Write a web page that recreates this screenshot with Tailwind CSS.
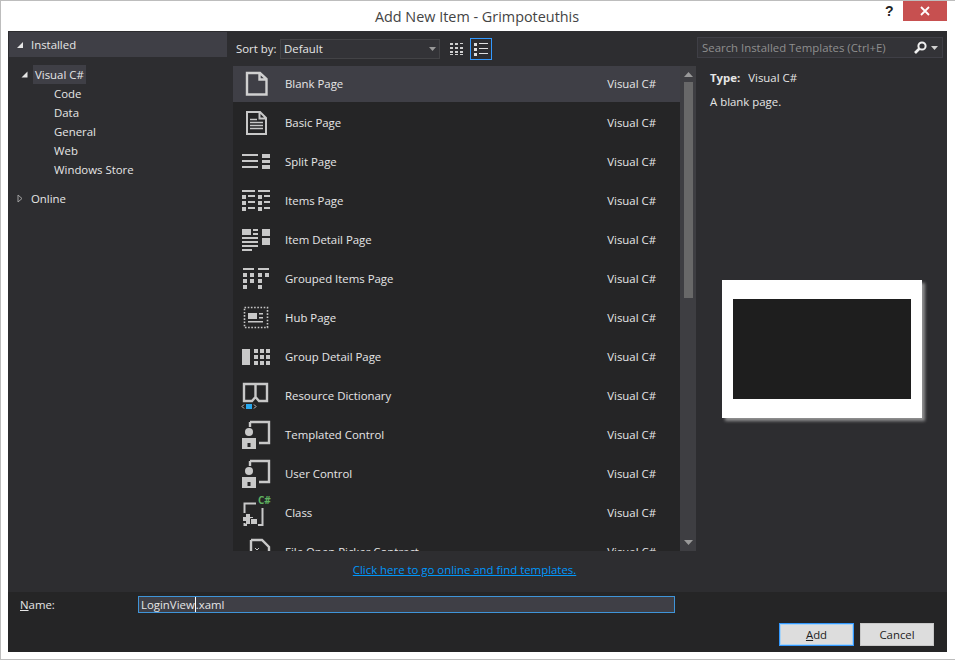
<!DOCTYPE html>
<html lang="en">
<head>
<meta charset="UTF-8">
<title>Add New Item - Grimpoteuthis</title>
<script src="https://cdn.jsdelivr.net/npm/@tailwindcss/browser@4"></script>
</head>
<body class="m-0 bg-white">
<div class="w-[955px] h-[660px] overflow-hidden flex flex-col bg-white border border-[#bdbdbd] border-r-0 font-['Open_Sans','Noto_Sans',sans-serif] text-[11.4px] leading-[16px] text-[#e6e6e6]">
  <!-- title bar -->
  <div class="h-[30px] shrink-0 flex relative">
    <div class="flex-1 flex items-center justify-center text-[14.4px] text-[#444] pt-[1px] pr-[2px]">Add New Item - Grimpoteuthis</div>
    <div class="absolute left-[884px] top-[2px] text-[14px] font-bold text-[#222] font-['Liberation_Sans',sans-serif]">?</div>
    <div class="absolute left-[902px] top-0 w-[44px] h-[20px] bg-[#c75050] flex items-center justify-center">
      <svg width="12" height="10" viewBox="0 0 12 10"><path d="M2 1 L10 9 M10 1 L2 9" stroke="#fff" stroke-width="1.8"/></svg>
    </div>
  </div>

  <!-- dialog body -->
  <div class="ml-[7px] w-[939px] h-[621px] shrink-0 bg-[#2d2d30] flex flex-col">
    <div class="h-[561px] shrink-0 flex">
      <!-- left tree -->
      <div class="w-[218px] ml-[1px] shrink-0 pt-[1px]">
        <div class="h-[25px] bg-[#3f3f46] flex items-center pl-[7px]">
          <svg width="8" height="8" viewBox="0 0 8 8" class="mr-[7px]"><path d="M7 1 V7 H1 Z" fill="#e6e6e6"/></svg>
          <span>Installed</span>
        </div>
        <div class="pt-[8px]">
          <div class="h-[19px] flex items-center pl-[12px]">
            <svg width="7" height="7" viewBox="0 0 7 7" class="mr-[5px]"><path d="M6.5 0.5 V6.5 H0.5 Z" fill="#e6e6e6"/></svg>
            <span class="bg-[#3f3f46] px-[2px] h-[19px] flex items-center">Visual C#</span>
          </div>
          <div class="pl-[45px]">
            <div class="h-[19px] flex items-center">Code</div>
            <div class="h-[19px] flex items-center">Data</div>
            <div class="h-[19px] flex items-center">General</div>
            <div class="h-[19px] flex items-center">Web</div>
            <div class="h-[19px] flex items-center">Windows Store</div>
          </div>
          <div class="h-[19px] mt-[10px] flex items-center pl-[8px]">
            <svg width="6" height="9" viewBox="0 0 6 9" class="mr-[8px]"><path d="M1 1 L5 4.5 L1 8 Z" fill="none" stroke="#a0a0a0"/></svg>
            <span>Online</span>
          </div>
        </div>
      </div>

      <!-- middle -->
      <div class="w-[463px] ml-[6px] shrink-0 flex flex-col">
        <div class="h-[35px] flex items-center shrink-0 relative">
          <span class="ml-[3px] w-[44px]">Sort by:</span>
          <div class="w-[160px] h-[20px] ml-[0px] mt-[1px] bg-[#333337] border border-[#434346] flex items-center justify-between pl-[3px] pr-[3px]">
            <span>Default</span>
            <svg width="7" height="4" viewBox="0 0 7 4"><path d="M0 0 H7 L3.5 4 Z" fill="#999"/></svg>
          </div>
          <svg width="14" height="14" viewBox="0 0 14 14" class="ml-[10px]" fill="#d0d0d0"><path d="M0 1h3v2H0zM5 1h3v2H5zM10 1h3v1h-3zM0 5h3v2H0zM5 5h3v2H5zM10 5h3v2h-3zM0 9h3v2H0zM5 9h3v2H5zM10 9h3v2h-3zM0 12h3v1H0zM5 12h3v1H5zM10 12h3v1h-3z"/></svg>
          <div class="w-[22px] h-[22px] ml-[6px] border border-[#3399ff] flex items-center justify-center">
            <svg width="16" height="14" viewBox="0 0 16 14" fill="#e0e0e0"><path d="M1 1h3v3H1zM6 1h9v1H6zM1 6h3v3H1zM6 6h9v1H6zM1 11h3v3H1zM6 11h9v1H6z"/></svg>
          </div>
        </div>

        <div class="h-[485px] shrink-0 flex bg-[#252526] overflow-hidden">
          <div class="w-[447px] shrink-0 overflow-hidden">
            <div class="h-[36px] mb-[3px] flex items-center bg-[#3f3f46] pl-[8px] pr-[24px]">
              <svg width="32" height="32" viewBox="0 0 32 32" class="shrink-0"><path d="M6 5 H19 L25.5 11 V26.5 H6 Z M18.5 5 V11.5 H25.5" fill="none" stroke="#d0d0d0" stroke-width="2.4"/></svg>
              <span class="ml-[12px] flex-1">Blank Page</span><span>Visual C#</span>
            </div>
            <div class="h-[36px] mb-[3px] flex items-center pl-[8px] pr-[24px]">
              <svg width="32" height="32" viewBox="0 0 32 32" class="shrink-0"><path d="M6 5 H19 L25 11 V27 H6 Z M18.5 5 V11.5 H25" fill="none" stroke="#c8c8c8" stroke-width="2"/><path d="M9 12.5h7M9 15.5h13M9 18.5h13M9 21.5h13" stroke="#c8c8c8" stroke-width="1.6"/></svg>
              <span class="ml-[12px] flex-1">Basic Page</span><span>Visual C#</span>
            </div>
            <div class="h-[36px] mb-[3px] flex items-center pl-[8px] pr-[24px]">
              <svg width="32" height="32" viewBox="0 0 32 32" class="shrink-0" fill="#c8c8c8"><path d="M1 8h16v2H1zM1 14h16v2H1zM1 20h16v2H1zM21 8h8v4h-8zM21 14h8v3h-8zM21 19h8v4h-8z"/></svg>
              <span class="ml-[12px] flex-1">Split Page</span><span>Visual C#</span>
            </div>
            <div class="h-[36px] mb-[3px] flex items-center pl-[8px] pr-[24px]">
              <svg width="32" height="32" viewBox="0 0 32 32" class="shrink-0" fill="#c8c8c8"><path d="M1 5h13v2H1zM17 5h12v2H17zM1 10h4v4H1zM7 10h7v2H7zM17 10h4v4h-4zM23 10h6v2h-6zM1 16h4v4H1zM7 16h7v2H7zM17 16h4v4h-4zM23 16h6v2h-6zM1 22h4v4H1zM7 22h7v2H7zM17 22h4v4h-4zM23 22h6v2h-6z"/></svg>
              <span class="ml-[12px] flex-1">Items Page</span><span>Visual C#</span>
            </div>
            <div class="h-[36px] mb-[3px] flex items-center pl-[8px] pr-[24px]">
              <svg width="32" height="32" viewBox="0 0 32 32" class="shrink-0" fill="#c8c8c8"><path d="M1 5h9v6H1zM12 5h5v2h-5zM12 9h5v2h-5zM1 13h16v2H1zM1 17h16v2H1zM1 21h16v2H1zM1 25h10v2H1zM21 5h8v7h-8zM21 14h8v7h-8z"/></svg>
              <span class="ml-[12px] flex-1">Item Detail Page</span><span>Visual C#</span>
            </div>
            <div class="h-[36px] mb-[3px] flex items-center pl-[8px] pr-[24px]">
              <svg width="32" height="32" viewBox="0 0 32 32" class="shrink-0" fill="#c8c8c8"><path d="M2 5h11v2H2zM17 5h11v2H17zM2 10h4v4H2zM9 10h4v4H9zM17 10h4v4h-4zM24 10h4v4h-4zM2 16h4v4H2zM9 16h4v4H9zM17 16h4v4h-4zM2 22h4v4H2zM17 22h4v4h-4z"/></svg>
              <span class="ml-[12px] flex-1">Grouped Items Page</span><span>Visual C#</span>
            </div>
            <div class="h-[36px] mb-[3px] flex items-center pl-[8px] pr-[24px]">
              <svg width="32" height="32" viewBox="0 0 32 32" class="shrink-0"><rect x="3.5" y="5.5" width="23" height="20" fill="none" stroke="#c8c8c8" stroke-width="1.6" stroke-dasharray="1.6 1.6"/><path d="M7 11h9v6H7zM7 19h15v1.5H7zM18 11h4v1.5h-4zM18 15h4v1.5h-4z" fill="#c8c8c8"/></svg>
              <span class="ml-[12px] flex-1">Hub Page</span><span>Visual C#</span>
            </div>
            <div class="h-[36px] mb-[3px] flex items-center pl-[8px] pr-[24px]">
              <svg width="32" height="32" viewBox="0 0 32 32" class="shrink-0" fill="#c8c8c8"><path d="M1 8h8v16H1zM13 8h4v4h-4zM19 8h4v4h-4zM25 8h4v4h-4zM13 14h4v4h-4zM19 14h4v4h-4zM25 14h4v4h-4zM13 20h4v4h-4zM19 20h4v4h-4zM25 20h4v4h-4z"/></svg>
              <span class="ml-[12px] flex-1">Group Detail Page</span><span>Visual C#</span>
            </div>
            <div class="h-[36px] mb-[3px] flex items-center pl-[8px] pr-[24px]">
              <svg width="32" height="32" viewBox="0 0 32 32" class="shrink-0"><path d="M3 4 H14.5 V17 L11 21 H3 Z M14.5 4 H26 V21 H18 L14.5 17" fill="none" stroke="#c8c8c8" stroke-width="2.4"/><rect x="5" y="24" width="6" height="5" fill="#29a9f0"/><path d="M3 24.5 L1 26.5 L3 28.5 M13 24.5 L15 26.5 L13 28.5" fill="none" stroke="#c8c8c8"/></svg>
              <span class="ml-[12px] flex-1">Resource Dictionary</span><span>Visual C#</span>
            </div>
            <div class="h-[36px] mb-[3px] flex items-center pl-[8px] pr-[24px]">
              <svg width="32" height="32" viewBox="0 0 32 32" class="shrink-0"><path d="M9 3 H28 V24 H18 M9 3 V8" fill="none" stroke="#c8c8c8" stroke-width="2.4"/><circle cx="8" cy="13" r="4" fill="#c8c8c8"/><path d="M1 19 H15 V30 H1 Z M6.5 24 h3 v4 h-3 Z" fill="#c8c8c8" fill-rule="evenodd"/></svg>
              <span class="ml-[12px] flex-1">Templated Control</span><span>Visual C#</span>
            </div>
            <div class="h-[36px] mb-[3px] flex items-center pl-[8px] pr-[24px]">
              <svg width="32" height="32" viewBox="0 0 32 32" class="shrink-0"><path d="M9 3 H28 V24 H18 M9 3 V8" fill="none" stroke="#c8c8c8" stroke-width="2.4"/><circle cx="8" cy="13" r="4" fill="#c8c8c8"/><path d="M1 19 H15 V30 H1 Z M6.5 24 h3 v4 h-3 Z" fill="#c8c8c8" fill-rule="evenodd"/></svg>
              <span class="ml-[12px] flex-1">User Control</span><span>Visual C#</span>
            </div>
            <div class="h-[36px] mb-[3px] flex items-center pl-[8px] pr-[24px]">
              <div class="w-[32px] h-[32px] shrink-0 relative">
                <svg width="32" height="32" viewBox="0 0 32 32"><path d="M3.5 16 V6.5 H15 M21.5 11 V28 H17 M3.5 26 V28 H6" fill="none" stroke="#c8c8c8" stroke-width="2"/><path d="M2 20h3v-3h4v3h3v4h-3v3H5v-3H2z" fill="#c8c8c8"/><path d="M9.5 21.5h7v6h-7z" fill="#c8c8c8" stroke="#252526"/></svg>
                <span class="absolute left-[17px] top-[-3px] text-[10px] leading-[12px] font-bold text-[#5fb060]">C#</span>
              </div>
              <span class="ml-[12px] flex-1">Class</span><span>Visual C#</span>
            </div>
            <div class="h-[36px] flex items-center pl-[8px] pr-[24px]">
              <svg width="32" height="32" viewBox="0 0 32 32" class="shrink-0"><path d="M10 4 H21 L28 11 V28 M10 4 V28" fill="none" stroke="#c8c8c8" stroke-width="2.4"/><path d="M14 12 l2 2 M18 12 l-2 2" stroke="#c8c8c8"/></svg>
              <span class="ml-[12px] flex-1">File Open Picker Contract</span><span>Visual C#</span>
            </div>
          </div>
          <div class="w-[16px] shrink-0 bg-[#3e3e42] flex flex-col items-center relative">
            <svg width="9" height="5" viewBox="0 0 9 5" class="mt-[6px]"><path d="M0 5 L4.5 0 L9 5 Z" fill="#999"/></svg>
            <div class="w-[9px] h-[216px] mt-[5px] bg-[#686868]"></div>
            <svg width="9" height="5" viewBox="0 0 9 5" class="absolute bottom-[6px]"><path d="M0 0 L9 0 L4.5 5 Z" fill="#999"/></svg>
          </div>
        </div>

        <div class="flex-1 flex items-center justify-center pb-[3px]">
          <span class="text-[#0097fb] underline">Click here to go online and find templates.</span>
        </div>
      </div>

      <!-- right details -->
      <div class="flex-1 flex flex-col pl-[1px]">
        <div class="w-[246px] h-[21px] mt-[6px] bg-[#333337] border border-[#3f3f46] flex items-center pl-[4px] shrink-0">
          <span class="flex-1 text-[#8f8f8f]">Search Installed Templates (Ctrl+E)</span>
          <svg width="15" height="15" viewBox="0 0 15 15" class="mr-[3px]"><circle cx="9" cy="6" r="3.6" fill="none" stroke="#f0f0f0" stroke-width="2"/><path d="M6.5 8.5 L2 13" stroke="#f0f0f0" stroke-width="2.6"/></svg>
          <svg width="7" height="4" viewBox="0 0 7 4" class="mr-[4px]"><path d="M0 0 H7 L3.5 4 Z" fill="#d0d0d0"/></svg>
        </div>
        <div class="pl-[13px] pt-[12px]">
          <div class="h-[16px]"><span class="font-bold mr-[8px]">Type:</span>Visual C#</div>
          <div class="mt-[8px] h-[16px]">A blank page.</div>
        </div>
        <div class="ml-[25px] mt-[170px] w-[200px] h-[138px] bg-white flex items-center justify-center shadow-[3px_3px_3px_rgba(170,170,170,0.8)]">
          <div class="w-[178px] h-[100px] bg-[#1e1e1e]"></div>
        </div>
      </div>
    </div>

    <!-- name row and buttons -->
    <div class="flex-1 bg-[#252526] relative">
      <div class="h-[17px] mt-[4px] ml-[12px] flex items-center">
        <span class="w-[118px]"><span class="underline">N</span>ame:</span>
        <div class="w-[537px] h-[17px] bg-[#3f3f46] border border-[#3f94d8] flex items-center pl-[2px]">
          <span>LoginView</span><span class="w-px h-[15px] bg-white"></span><span>.xaml</span>
        </div>
      </div>
      <div class="flex justify-end mt-[10px] mr-[13px] gap-[6px]">
        <button class="w-[75px] h-[23px] bg-[#dddddd] border border-[#3399ff] shadow-[inset_0_0_0_1px_#a9d3f5] text-[#1e1e1e]"><span class="underline">A</span>dd</button>
        <button class="w-[74px] h-[23px] bg-[#dddddd] border border-[#c8c8c8] text-[#1e1e1e]">Cancel</button>
      </div>
    </div>
  </div>
</div>
</body>
</html>
